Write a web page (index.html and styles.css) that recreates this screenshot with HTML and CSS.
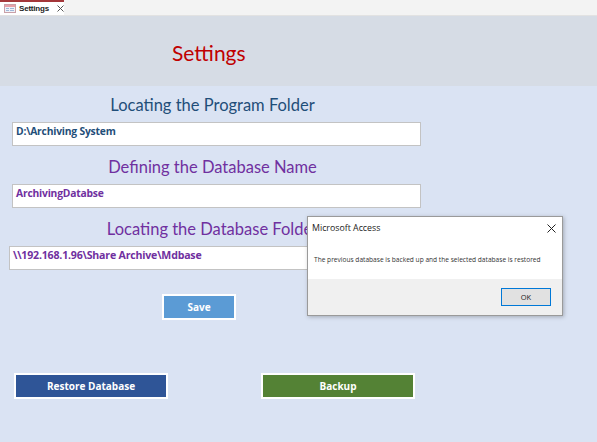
FILE: index.html
```html
<!DOCTYPE html>
<html>
<head>
<meta charset="utf-8">
<link rel="stylesheet" href="styles.css">
</head>
<body>
<div class="tabbar">
  <div class="tab">
    <svg class="tab-icon" width="12" height="9" viewBox="0 0 12 9">
      <rect x="0.5" y="0.5" width="11" height="8" fill="#eef2f8" stroke="#c9a0a8"/>
      <rect x="1" y="1" width="10" height="2" fill="#e8a0a8"/>
      <rect x="2" y="4" width="3" height="1" fill="#9fb6d8"/>
      <rect x="6" y="4" width="4" height="1" fill="#9fb6d8"/>
      <rect x="2" y="6" width="3" height="1" fill="#9fb6d8"/>
      <rect x="6" y="6" width="4" height="1" fill="#9fb6d8"/>
    </svg>
    <span class="tab-label">Settings</span>
    <svg class="tab-close" width="7" height="7" viewBox="0 0 7 7"><path d="M0.5 0.5L6.5 6.5M6.5 0.5L0.5 6.5" stroke="#555" stroke-width="1"/></svg>
  </div>
</div>
<div class="header"><h1 class="title">Settings</h1></div>
<main class="form">
  <section class="field">
    <h2 class="label blue">Locating the Program Folder</h2>
    <div class="input blue">D:\Archiving System</div>
  </section>
  <section class="field">
    <h2 class="label purple">Defining the Database Name</h2>
    <div class="input purple">ArchivingDatabse</div>
  </section>
  <section class="field third">
    <h2 class="label purple">Locating the Database Folder</h2>
    <div class="input purple big">\\192.168.1.96\Share Archive\Mdbase</div>
  </section>
  <div class="save-row"><button class="btn save">Save</button></div>
  <div class="actions">
    <button class="btn restore">Restore Database</button>
    <button class="btn backup">Backup</button>
  </div>
</main>
<div class="dialog">
  <div class="dlg-title">
    <span>Microsoft Access</span>
    <svg width="9" height="9" viewBox="0 0 9 9"><path d="M0.5 0.5L8.5 8.5M8.5 0.5L0.5 8.5" stroke="#222" stroke-width="1"/></svg>
  </div>
  <div class="dlg-msg">The previous database is backed up and the selected database is restored</div>
  <div class="dlg-foot"><button class="ok">OK</button></div>
</div>
</body>
</html>
```
FILE: styles.css
```css
html, body { margin: 0; padding: 0; }
body {
  width: 597px;
  height: 442px;
  background: #dae3f3;
  font-family: Lato, "Open Sans", sans-serif;
  position: relative;
  overflow: hidden;
}
.tabbar {
  height: 15px;
  background: #f3f3f3;
  border-bottom: 1px solid #e2e2e2;
  display: flex;
}
.tab {
  width: 64px;
  height: 15px;
  box-sizing: border-box;
  background: #fff;
  border-top: 2px solid #a4373a;
  display: flex;
  align-items: center;
  padding-left: 4px;
}
.tab-icon { margin-right: 3px; }
.tab-label {
  font-family: "Liberation Sans", sans-serif;
  font-weight: bold;
  font-size: 8px;
  color: #222;
  letter-spacing: -0.2px;
}
.tab-close { margin-left: 8px; }
.header {
  height: 70px;
  background: #d6dce5;
  display: flex;
  align-items: center;
}
.title {
  margin: 0 0 0 172px;
  font-weight: normal;
  font-size: 21px;
  color: #c00000;
  line-height: 1;
  padding-top: 3px;
}
.form {
  width: 409px;
  margin-left: 12px;
  padding-top: 6px;
}
.field {
  display: flex;
  flex-direction: column;
  margin-bottom: 8px;
}
.label {
  margin: 0 0 4px 0;
  height: 26px;
  display: flex;
  align-items: center;
  justify-content: center;
  font-weight: normal;
  font-size: 16.5px;
  white-space: nowrap;
  padding-right: 8px;
}
.blue { color: #1f4e79; }
.purple { color: #7030a0; }
.input {
  height: 24px;
  box-sizing: border-box;
  background: #fff;
  border: 1px solid #c3c3c3;
  font-family: "Open Sans", sans-serif;
  font-weight: bold;
  font-size: 10.3px;
  padding: 1px 0 0 3px;
  letter-spacing: -0.2px;
}
.third .input { margin-left: -3px; width: 412px; }
.input.big { font-size: 10.6px; padding-top: 1px; }
.btn {
  font-family: "Open Sans", sans-serif;
  font-weight: bold;
  color: #fff;
  font-size: 10px;
  border: 2px solid #fff;
  height: 26px;
  padding: 0;
  display: block;
}
.save-row { padding: 16px 0 0 150px; }
.save { width: 74px; background: #5b9bd5; }
.actions {
  display: flex;
  gap: 93px;
  padding-top: 53px;
  margin-left: 2px;
}
.restore { width: 154px; background: #2f5597; }
.backup { width: 154px; background: #548235; }
.dialog {
  position: absolute;
  left: 307px;
  top: 216px;
  width: 256px;
  height: 100px;
  box-sizing: border-box;
  background: #fff;
  border: 1px solid #9a9a9a;
  box-shadow: 1px 1px 4px rgba(0,0,0,0.25);
  display: flex;
  flex-direction: column;
  font-family: "Open Sans", sans-serif;
}
.dlg-title {
  height: 22px;
  display: flex;
  align-items: center;
  justify-content: space-between;
  padding: 0 6px 0 4px;
  font-size: 8.8px;
  color: #222;
}
.dlg-msg {
  height: 40px;
  display: flex;
  align-items: center;
  padding-left: 6px;
  font-size: 6.6px;
  color: #333;
  white-space: nowrap;
}
.dlg-foot {
  flex: 1;
  background: #f0f0f0;
  display: flex;
  align-items: center;
  justify-content: flex-end;
  padding-right: 11px;
}
.ok {
  width: 50px;
  height: 18px;
  background: #e1e1e1;
  border: 1px solid #0078d7;
  font-family: "Open Sans", sans-serif;
  font-size: 7.5px;
  color: #222;
  padding: 0;
}
```
